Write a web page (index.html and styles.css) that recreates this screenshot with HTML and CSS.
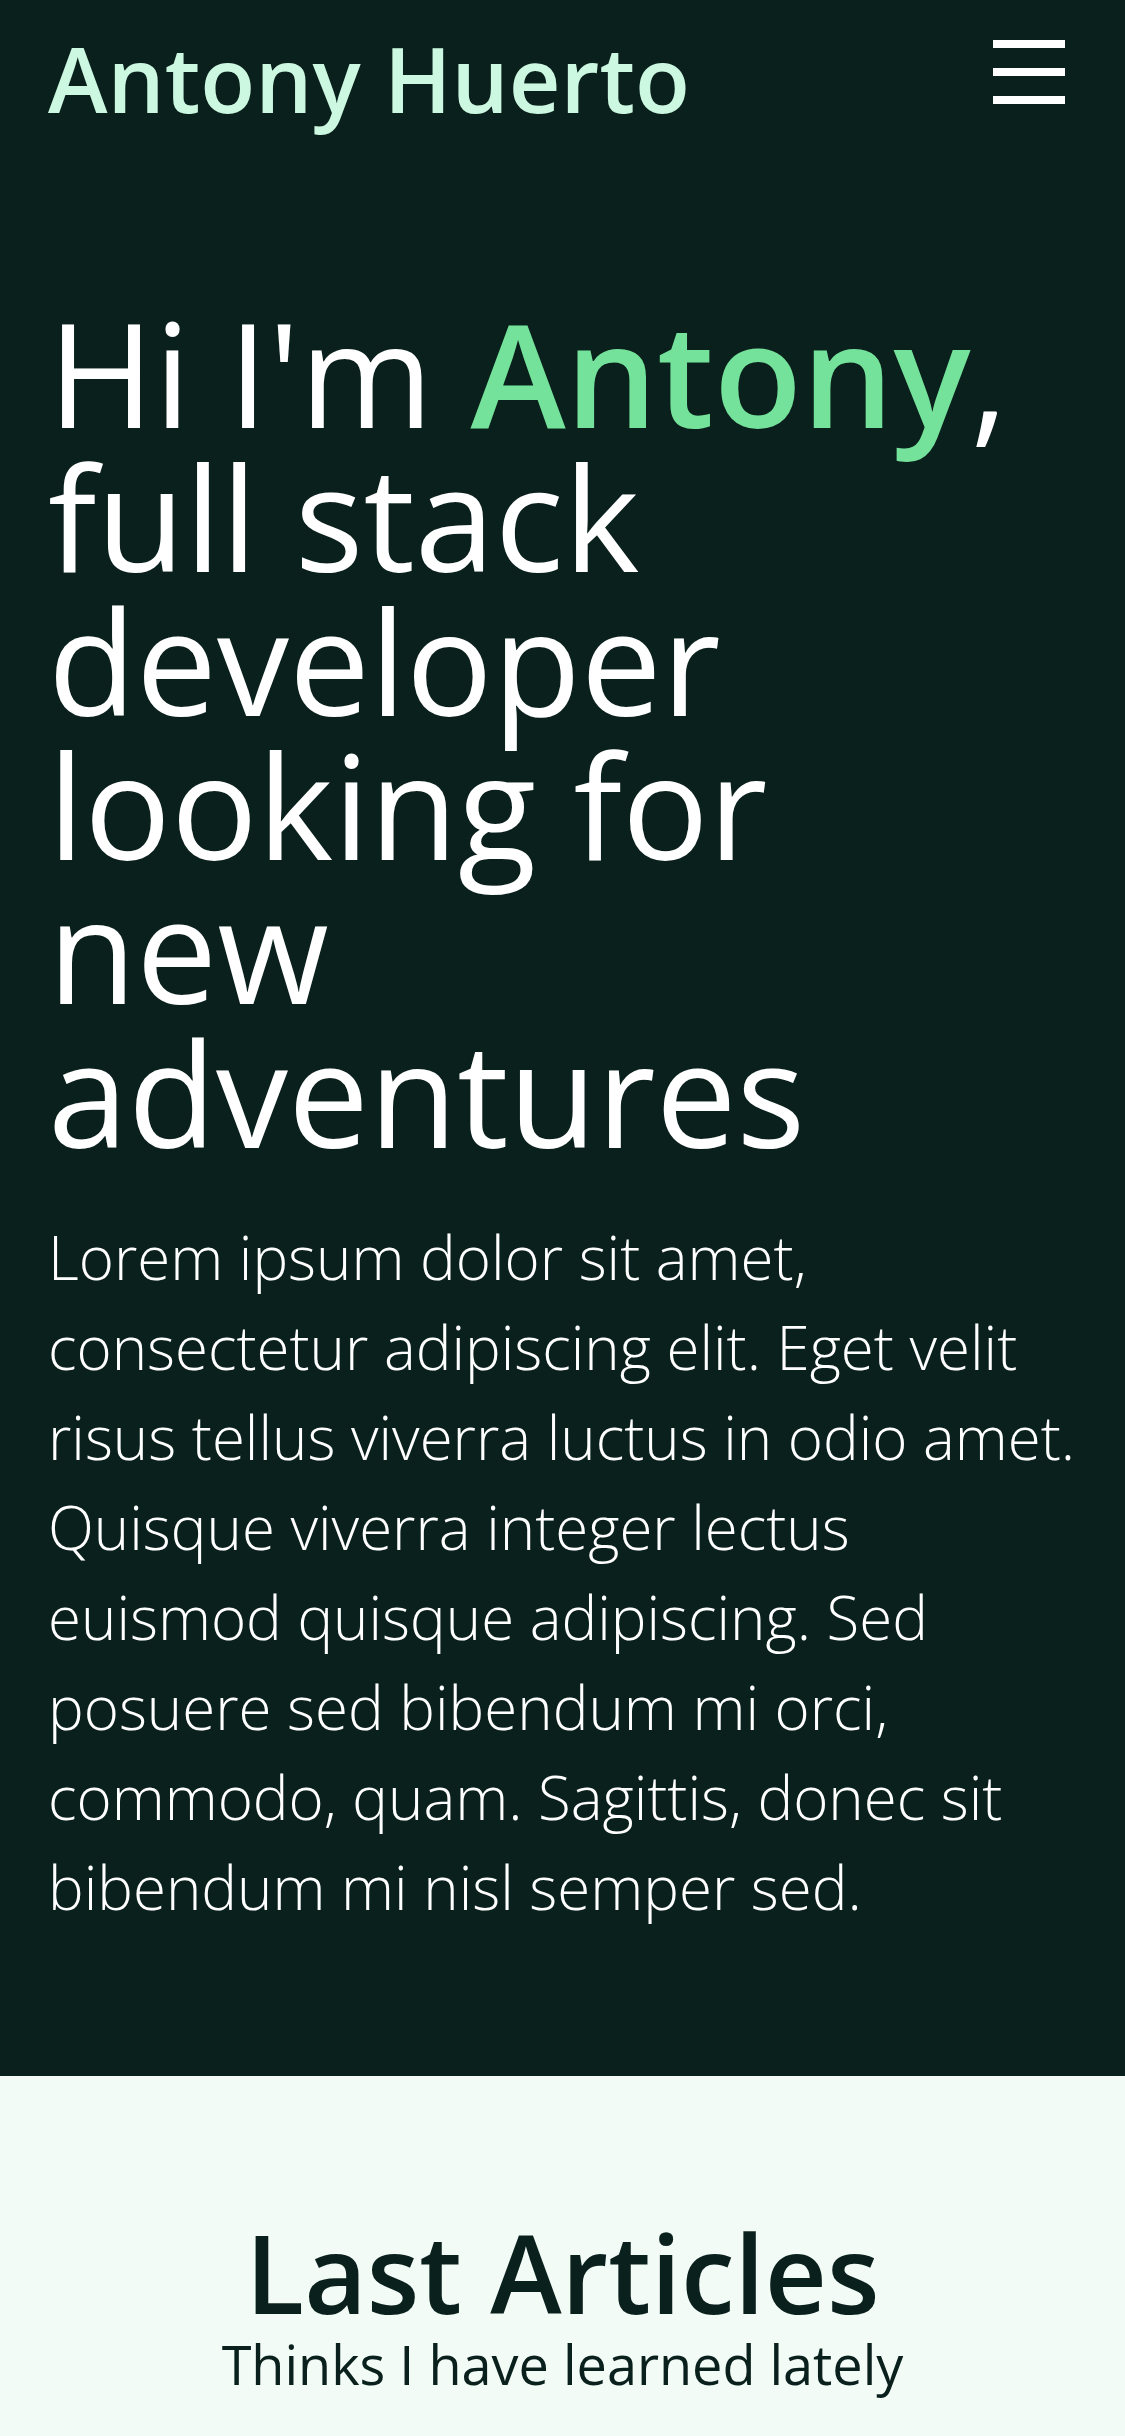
FILE: index.html
```
<!DOCTYPE html>
<html lang="en">
<head>
<meta charset="utf-8">
<title>Antony Huerto</title>
<link rel="stylesheet" href="styles.css">
</head>
<body>
<div class="hero">
  <header class="header">
    <div class="brand">Antony Huerto</div>
    <button class="menu" aria-label="Menu">
      <span class="bar"></span>
      <span class="bar"></span>
      <span class="bar"></span>
    </button>
  </header>
  <section class="intro">
    <h1 class="title">Hi I'm <span class="accent">Antony</span>, full stack developer looking for new adventures</h1>
    <p class="lead">Lorem ipsum dolor sit amet, consectetur adipiscing elit. Eget velit risus tellus viverra luctus in odio amet. Quisque viverra integer lectus euismod quisque adipiscing. Sed posuere sed bibendum mi orci, commodo, quam. Sagittis, donec sit bibendum mi nisl semper sed.</p>
  </section>
</div>
<section class="articles">
  <h2 class="articles-title">Last Articles</h2>
  <p class="articles-sub">Thinks I have learned lately</p>
</section>
</body>
</html>
```
FILE: styles.css
```
* { box-sizing: border-box; }
html, body { margin: 0; padding: 0; }
body {
  font-family: "Open Sans", "Noto Sans", sans-serif;
  background: #f3fbf7;
  width: 1125px;
}
.hero {
  background: #0a201c;
  color: #ffffff;
  padding: 0 48px 144px;
}
.header {
  display: flex;
  justify-content: space-between;
  align-items: flex-start;
}
.brand {
  margin-top: 17px;
  font-size: 90px;
  font-weight: 600;
  line-height: 122px;
  color: #ccf8e1;
}
.menu {
  margin-top: 24px;
  width: 96px;
  height: 96px;
  padding: 16px 12px;
  background: none;
  border: 0;
  display: flex;
  flex-direction: column;
  justify-content: space-between;
}
.bar {
  display: block;
  width: 72px;
  height: 8px;
  background: #ffffff;
}
.intro { padding-top: 161px; }
.title {
  margin: 0;
  font-size: 144px;
  font-weight: 400;
  line-height: 144px;
}
.accent {
  color: #74e29a;
  font-weight: 600;
}
.lead {
  margin: 48px 0 0;
  font-size: 60px;
  font-weight: 300;
  line-height: 90px;
}
.articles {
  display: flex;
  flex-direction: column;
  align-items: center;
  padding-top: 143px;
  padding-bottom: 40px;
  color: #0a201c;
}
.articles-title {
  margin: 0;
  font-size: 108px;
  font-weight: 600;
  line-height: 108px;
}
.articles-sub {
  margin: 10px 0 0;
  font-size: 54px;
  font-weight: 400;
  line-height: 54px;
}
```
